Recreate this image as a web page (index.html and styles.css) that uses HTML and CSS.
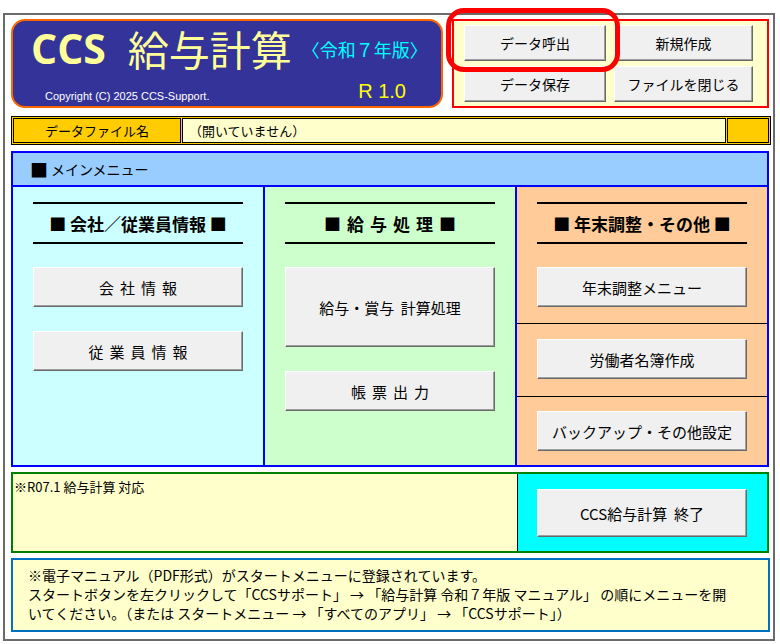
FILE: index.html
```html
<!DOCTYPE html>
<html lang="ja">
<head>
<meta charset="utf-8">
<title>CCS 給与計算</title>
<link rel="stylesheet" href="styles.css">
</head>
<body>
<div class="frame">
  <div class="top">
    <div class="logo">
      <div class="logo-title">
        <span class="ccs">CCS</span>
        <span class="kyuyo">給与計算</span>
        <span class="edition">〈令和７年版〉</span>
      </div>
      <div class="logo-sub">
        <span class="copyright">Copyright (C) 2025 CCS-Support.</span>
        <span class="version">R 1.0</span>
      </div>
    </div>
    <div class="panel">
      <button class="btn btn-top">データ呼出</button>
      <button class="btn btn-top">新規作成</button>
      <button class="btn btn-top">データ保存</button>
      <button class="btn btn-top">ファイルを閉じる</button>
    </div>
  </div>

  <div class="filerow">
    <div class="fr-label">データファイル名</div>
    <div class="fr-value">（開いていません）</div>
    <div class="fr-end"></div>
  </div>

  <div class="menu">
    <div class="menu-head"><span class="head-mark">■</span>メインメニュー</div>
    <div class="menu-cols">
      <div class="col col-a">
        <div class="sec-title">■ 会社／従業員情報 ■</div>
        <button class="btn btn-menu spaced">会社情報</button>
        <button class="btn btn-menu btn-next spaced">従業員情報</button>
      </div>
      <div class="col col-b">
        <div class="sec-title wide">■給与処理■</div>
        <button class="btn btn-menu btn-tall">給与・賞与&nbsp;&nbsp;計算処理</button>
        <button class="btn btn-menu btn-next spaced">帳票出力</button>
      </div>
      <div class="col col-c">
        <div class="sec sec1">
          <div class="sec-title">■ 年末調整・その他 ■</div>
          <button class="btn btn-menu">年末調整メニュー</button>
        </div>
        <div class="sec sec2">
          <button class="btn btn-menu">労働者名簿作成</button>
        </div>
        <div class="sec sec3">
          <button class="btn btn-menu">バックアップ・その他設定</button>
        </div>
      </div>
    </div>
  </div>

  <div class="bottom">
    <div class="note">※R07.1 給与計算 対応</div>
    <div class="exit">
      <button class="btn btn-exit">CCS給与計算&nbsp;&nbsp;終了</button>
    </div>
  </div>

  <div class="footer">
    <p>※電子マニュアル（PDF形式）がスタートメニューに登録されています。</p>
    <p>スタートボタンを左クリックして「CCSサポート」 → 「給与計算 令和７年版 マニュアル」 の順にメニューを開</p>
    <p>いてください。（または スタートメニュー → 「すべてのアプリ」 → 「CCSサポート」）</p>
  </div>

  <div class="highlight"></div>
</div>
</body>
</html>
```

FILE: styles.css
```css
* {
  box-sizing: border-box;
  margin: 0;
  padding: 0;
}

body {
  margin: 0;
  width: 780px;
  height: 644px;
  overflow: hidden;
  background: #ffffff;
  color: #000000;
  font-family: "Noto Sans CJK JP", "Noto Sans", sans-serif;
}

.frame {
  position: relative;
  margin: 13px 0 0 3px;
  width: 772px;
  height: 628px;
  border: 2px solid #6b6b6b;
  padding: 4px 0 0 6px;
}

/* ---------- top ---------- */
.top {
  display: flex;
  height: 89px;
}

.logo {
  width: 432px;
  height: 89px;
  background: #333399;
  border: 2px solid #ff6600;
  border-radius: 14px;
  padding: 2px 0 0 18px;
  display: flex;
  flex-direction: column;
}

.logo-title {
  display: flex;
  align-items: center;
  height: 50px;
  line-height: 1;
}

.ccs {
  font-family: "Open Sans", "Noto Sans", sans-serif;
  font-weight: 700;
  font-size: 41px;
  color: #ffff99;
}

.kyuyo {
  font-size: 41px;
  color: #ffff99;
  margin-left: 22px;
}

.edition {
  font-size: 18px;
  color: #00ffff;
  margin-left: 10px;
  margin-top: 2px;
}

.logo-sub {
  display: flex;
  align-items: flex-end;
  height: 30px;
}

.copyright {
  font-family: "Liberation Sans", Arial, sans-serif;
  font-size: 11px;
  line-height: 13px;
  color: #ffffff;
  margin-left: 14px;
}

.version {
  font-family: "Liberation Sans", Arial, sans-serif;
  font-size: 20px;
  line-height: 23px;
  color: #ffff00;
  margin-left: auto;
  margin-right: 35px;
}

.panel {
  margin-left: 9px;
  width: 317px;
  height: 89px;
  border: 2px solid #ff0000;
  background: #ffffcc;
  display: grid;
  grid-template-columns: 142px 139px;
  grid-template-rows: 36px 36px;
  column-gap: 8px;
  row-gap: 5px;
  padding: 4px 0 0 10px;
}

/* ---------- buttons ---------- */
.btn {
  display: flex;
  align-items: center;
  justify-content: center;
  background: #f0f0f0;
  border-style: solid;
  border-width: 1px;
  border-color: #ffffff #696969 #696969 #ffffff;
  box-shadow: inset -1px -1px 0 #a0a0a0;
  font-family: "Noto Sans CJK JP", "Noto Sans", sans-serif;
  font-size: 15px;
  color: #000000;
  white-space: nowrap;
}

.btn-top {
  font-size: 14px;
}

.btn-menu {
  width: 210px;
  height: 40px;
  margin-top: 23px;
}

.btn-next {
  margin-top: 24px;
}

.btn-tall {
  height: 80px;
}

.spaced {
  letter-spacing: 6px;
  padding-left: 6px;
}

/* ---------- file row ---------- */
.filerow {
  margin-top: 8px;
  width: 760px;
  height: 29px;
  border: 1px solid #000000;
  background: #ffcc00;
  padding: 1px;
  display: flex;
  gap: 1px;
  font-size: 13px;
}

.fr-label {
  width: 168px;
  border: 1px solid #000000;
  display: flex;
  align-items: center;
  justify-content: center;
}

.fr-value {
  flex: 1;
  border: 1px solid #000000;
  background: #ffffcc;
  display: flex;
  align-items: center;
  padding-left: 6px;
}

.fr-end {
  width: 42px;
  border: 1px solid #000000;
}

/* ---------- main menu ---------- */
.menu {
  margin-top: 6px;
  width: 758px;
  height: 316px;
  border: 2px solid #0000ff;
}

.menu-head {
  height: 34px;
  border-bottom: 2px solid #0000ff;
  background: #99ccff;
  padding-left: 17px;
  display: flex;
  align-items: center;
  font-size: 14px;
}

.head-mark {
  font-size: 18px;
  margin-right: 3px;
}

.menu-cols {
  display: flex;
  height: 278px;
}

.col {
  width: 250px;
  padding: 0 20px;
}

.col-a {
  width: 252px;
  background: #ccffff;
  border-right: 2px solid #0000ff;
}

.col-b {
  width: 252px;
  background: #ccffcc;
  border-right: 2px solid #0000ff;
}

.col-c {
  background: #ffcc99;
  padding: 0;
  display: flex;
  flex-direction: column;
}

.sec-title {
  margin-top: 15px;
  height: 42px;
  border-top: 2px solid #000000;
  border-bottom: 2px solid #000000;
  display: flex;
  align-items: center;
  justify-content: center;
  font-weight: 700;
  font-size: 17px;
  white-space: nowrap;
}

.sec-title.wide {
  letter-spacing: 6px;
  padding-left: 6px;
}

.sec {
  padding: 0 20px;
  border-bottom: 1px solid #000000;
}

.sec1 {
  height: 137px;
}

.sec2 {
  height: 73px;
  padding-top: 15px;
}

.sec2 .btn-menu,
.sec3 .btn-menu {
  margin-top: 0;
}

.sec3 {
  flex: 1;
  border-bottom: none;
  padding-top: 14px;
}

/* ---------- bottom ---------- */
.bottom {
  margin-top: 5px;
  width: 758px;
  height: 81px;
  border: 2px solid #008000;
  display: flex;
}

.note {
  width: 505px;
  border-right: 1px solid #000000;
  background: #ffffcc;
  font-size: 13px;
  line-height: 16px;
  padding: 5px 0 0 1px;
}

.exit {
  flex: 1;
  background: #00ffff;
  padding: 15px 0 0 19px;
}

.btn-exit {
  width: 210px;
  height: 48px;
}

/* ---------- footer ---------- */
.footer {
  margin-top: 5px;
  width: 759px;
  height: 74px;
  border: 2px solid #0070c0;
  background: #ffffcc;
  padding: 6px 0 0 15px;
  font-size: 14px;
  line-height: 19px;
  white-space: nowrap;
}

/* ---------- highlight overlay ---------- */
.highlight {
  position: absolute;
  left: 441px;
  top: -7px;
  width: 174px;
  height: 64px;
  border: 5px solid #ff0000;
  border-radius: 18px;
  z-index: 2;
}
```
